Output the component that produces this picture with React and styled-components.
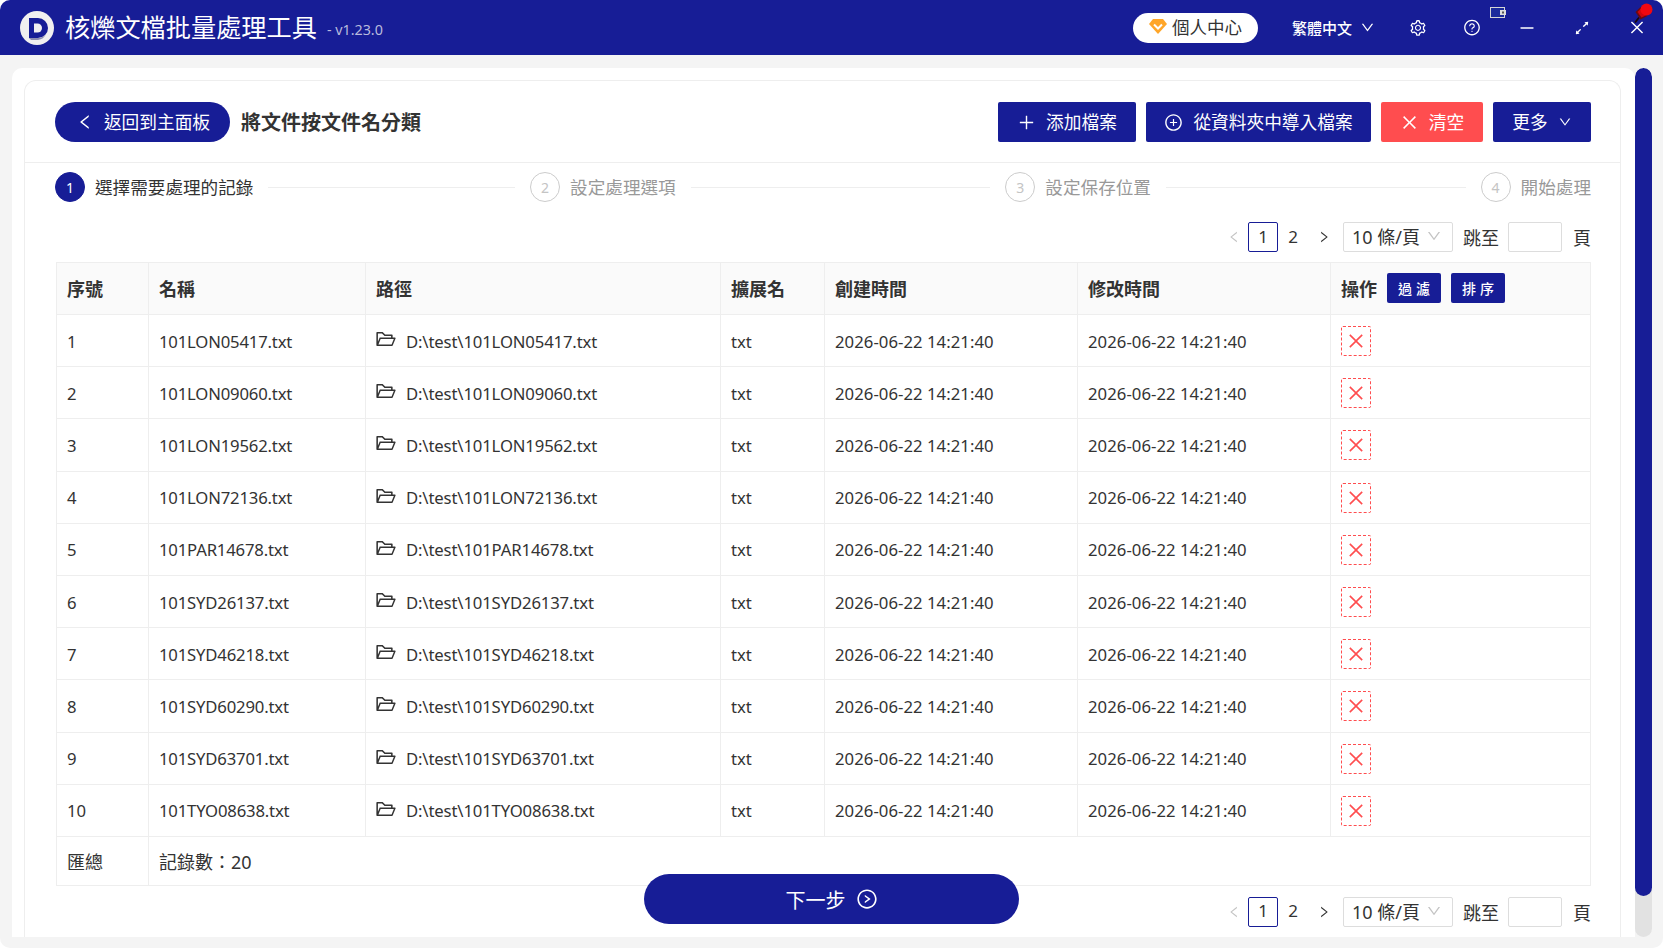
import React from 'react';
import styled, { createGlobalStyle } from 'styled-components';
import {
  AiOutlineLeft, AiOutlineRight, AiOutlineDown, AiOutlinePlus, AiOutlinePlusCircle, AiOutlineClose,
  AiOutlineSetting, AiOutlineQuestionCircle, AiOutlineMinus, AiOutlineArrowsAlt, AiOutlineFolderOpen,
  AiOutlineRightCircle,
} from 'react-icons/ai';

const BLUE = '#171d96';
const LINE = '#eeeeee';
const FONT = '"Noto Sans", "Noto Sans CJK TC", sans-serif';

const GlobalStyle = createGlobalStyle`
  html, body {
    margin: 0;
    padding: 0;
    background: #ffffff;
    font-family: ${FONT};
    color: #333333;
  }
  * { box-sizing: border-box; }
`;

const Window = styled.div`
  position: relative;
  width: 1663px;
  height: 948px;
  border-radius: 10px;
  overflow: hidden;
  background: #f4f4f4;
  display: flex;
  flex-direction: column;
`;

const TitleBar = styled.header`
  height: 55px;
  flex: none;
  background: ${BLUE};
  color: #fff;
  display: flex;
  align-items: center;
  padding-left: 20px;
`;

const AppName = styled.div`
  font-size: 25.2px;
  margin-left: 11px;
  line-height: 1;
`;

const Version = styled.div`
  font-size: 14.3px;
  color: #b9bbdd;
  margin-left: 10px;
  margin-top: 3px;
`;

const Spacer = styled.div`
  flex: 1;
`;

const UserPill = styled.div`
  width: 125px;
  height: 30px;
  border-radius: 15px;
  background: #fff;
  color: #333;
  font-size: 17.5px;
  padding-bottom: 2px;
  display: flex;
  align-items: center;
  justify-content: center;
  gap: 5px;
  margin-right: 34px;
`;

const Lang = styled.div`
  font-size: 15px;
  font-weight: 500;
  display: flex;
  align-items: center;
  gap: 8px;
  margin-right: 34px;
  svg { font-size: 15px; }
`;

const BarIcon = styled.div`
  width: ${p => p.$w}px;
  margin-right: ${p => p.$mr}px;
  display: flex;
  justify-content: center;
  font-size: ${p => p.$size || 18}px;
`;

const TrayBadge = styled.div`
  position: absolute;
  left: 1490px;
  top: 7px;
  line-height: 0;
`;

const PinBadge = styled.div`
  position: absolute;
  left: 1634px;
  top: 3px;
  line-height: 0;
`;

const Body = styled.div`
  flex: 1;
  min-height: 0;
  display: flex;
  padding: 13px 11px 11px 12px;
`;

const Panel = styled.main`
  flex: 1;
  background: #fff;
  border-radius: 10px 10px 0 0;
  padding: 12px 14px 0 12px;
  display: flex;
`;

const Card = styled.section`
  position: relative;
  flex: 1;
  border: 1px solid ${LINE};
  border-bottom: none;
  border-radius: 12px 12px 0 0;
  display: flex;
  flex-direction: column;
`;

const ScrollTrack = styled.div`
  width: 17px;
  flex: none;
  border-radius: 9px;
  background: #e2e2e2;
  overflow: hidden;
`;

const ScrollThumb = styled.div`
  height: 828px;
  background: ${BLUE};
  border-radius: 9px;
`;

const TopRow = styled.div`
  height: 82px;
  flex: none;
  border-bottom: 1px solid ${LINE};
  padding: 21px 29px 0 30px;
  display: flex;
  align-items: flex-start;
`;

const BackButton = styled.button`
  width: 175px;
  height: 40px;
  border: none;
  border-radius: 20px;
  background: ${BLUE};
  color: #fff;
  font: 17.7px ${FONT};
  display: flex;
  align-items: center;
  justify-content: center;
  gap: 10px;
  padding: 0 0 2px 1px;
  svg { font-size: 18px; margin-top: 2px; }
`;

const PageTitle = styled.h1`
  margin: 1px 0 0 11px;
  font-size: 20px;
  line-height: 40px;
  font-weight: 700;
  color: #333;
`;

const ActionButton = styled.button`
  width: ${p => p.$w}px;
  height: 40px;
  margin-left: 10px;
  border: none;
  border-radius: 2px;
  background: ${p => (p.$danger ? '#ff4d4f' : BLUE)};
  color: #fff;
  font: 17.7px ${FONT};
  display: flex;
  align-items: center;
  justify-content: center;
  gap: 10px;
  padding: 0 0 2px 0;
  svg { font-size: ${p => p.$icon || 19}px; margin-top: 2px; }
`;

const Steps = styled.div`
  margin-top: 9px;
  padding: 0 29px 0 30px;
  height: 30px;
  flex: none;
  display: flex;
  align-items: center;
`;

const StepDot = styled.div`
  width: 30px;
  height: 30px;
  border-radius: 50%;
  flex: none;
  font-size: 14px;
  display: flex;
  align-items: center;
  justify-content: center;
  background: ${p => (p.$active ? BLUE : '#fff')};
  color: ${p => (p.$active ? '#fff' : '#c4c4c4')};
  border: 1px solid ${p => (p.$active ? BLUE : '#cccccc')};
`;

const StepLabel = styled.div`
  margin-left: 10px;
  padding-bottom: 2px;
  font-size: 17.6px;
  color: ${p => (p.$active ? '#333' : '#999')};
  white-space: nowrap;
`;

const StepLine = styled.div`
  flex: ${p => p.$w} 1 0;
  height: 1px;
  background: ${LINE};
  margin: 0 15px;
`;

const Pager = styled.div`
  height: 30px;
  flex: none;
  margin: ${p => p.$top}px 29px 0 0;
  display: flex;
  align-items: center;
  justify-content: flex-end;
  font-size: 18px;
`;

const PagerArrow = styled.div`
  width: 14px;
  display: flex;
  justify-content: center;
  font-size: 16px;
  color: ${p => (p.$off ? '#c4c4c4' : '#333')};
  margin: ${p => p.$m};
`;

const PageNo = styled.div`
  width: 30px;
  height: 30px;
  border-radius: 2px;
  border: 1px solid ${p => (p.$on ? BLUE : 'transparent')};
  font-size: 17px;
  padding-bottom: 2px;
  display: flex;
  align-items: center;
  justify-content: center;
  margin: ${p => p.$m};
`;

const SizeSelect = styled.div`
  width: 110px;
  height: 30px;
  border: 1px solid #dddddd;
  border-radius: 2px;
  padding: 0 10px 2px 8px;
  display: flex;
  align-items: center;
  justify-content: space-between;
  font-size: 18px;
  svg { font-size: 16px; color: #c4c4c4; }
`;

const JumpLabel = styled.div`
  margin: 0 9px 0 10px;
`;

const JumpInput = styled.div`
  width: 54px;
  height: 30px;
  border: 1px solid #dddddd;
  border-radius: 2px;
`;

const PageWord = styled.div`
  margin-left: 11px;
`;

const Table = styled.div`
  margin: 10px 29px 0 31px;
  border-top: 1px solid ${LINE};
  border-left: 1px solid ${LINE};
  flex: none;
`;

const Row = styled.div`
  display: grid;
  grid-template-columns: 92px 217px 355px 104px 253px 253px 260px;
  height: ${p => p.$h}px;
  background: ${p => (p.$head ? '#fafafa' : '#fff')};
  font-weight: ${p => (p.$head ? 700 : 400)};
  font-size: ${p => (p.$head ? 18 : 16.7)}px;
  & > div { padding-bottom: ${p => (p.$head ? 2 : 0)}px; padding-top: ${p => (p.$head ? 0 : 1)}px; }
`;

const Cell = styled.div`
  border-right: 1px solid ${LINE};
  border-bottom: 1px solid ${LINE};
  padding-left: 10px;
  display: flex;
  align-items: center;
  min-width: 0;
  white-space: nowrap;
  letter-spacing: ${p => p.$ls || 0}px;
`;

const SummaryRow = styled.div`
  display: grid;
  grid-template-columns: 92px 1fr;
  height: 49px;
  font-size: 18px;
`;

const FolderIcon = styled.span`
  display: flex;
  font-size: 22px;
  margin: -4px 9px 0 -1px;
  color: #333;
`;

const DeleteBox = styled.button`
  width: 30px;
  height: 30px;
  padding: 0;
  border: 1px dashed #ff4d4f;
  border-radius: 2px;
  background: #fff;
  color: #ff4d4f;
  display: flex;
  align-items: center;
  justify-content: center;
  font-size: 20px;
`;

const HeadTag = styled.button`
  width: 54px;
  height: 30px;
  margin-left: 10px;
  border: none;
  border-radius: 2px;
  background: ${BLUE};
  color: #fff;
  font: 500 14px ${FONT};
  letter-spacing: 4px;
  padding: 0 0 0 4px;
`;

const NextButton = styled.button`
  position: absolute;
  left: 619px;
  bottom: 13px;
  width: 375px;
  height: 50px;
  border: none;
  border-radius: 25px;
  background: ${BLUE};
  color: #fff;
  font: 20px ${FONT};
  display: flex;
  align-items: center;
  justify-content: center;
  gap: 10px;
  padding: 0;
  svg { font-size: 22px; }
`;

const Logo = () => (
  <svg width="34" height="34" viewBox="0 0 34 34">
    <circle cx="17" cy="17" r="17" fill="#f1f0f0" />
    <path d="M9 7h9a10 10 0 0 1 0 20H9z" fill={BLUE} />
    <path d="M14 12.500h3.500a4.500 4.500 0 0 1 0 9H14z" fill="#f1f0f0" />
    <path d="M9 27h9a10 10 0 0 0 8-4a10 10 0 0 1-8 6H11z" fill="#8d8db0" />
  </svg>
);

const Gem = () => (
  <svg width="18" height="15" viewBox="0 0 18 15">
    <path d="M4 0h10l4 5-9 10L0 5z" fill="#ffa629" />
    <path d="M5 5.500l4 4 4-4" fill="none" stroke="#fff" strokeWidth="2" />
  </svg>
);

const Tray = () => (
  <svg width="16" height="11" viewBox="0 0 16 11">
    <rect x="0.500" y="0.500" width="14" height="10" fill="#1c2a9c" stroke="#d5d5d5" />
    <rect x="10" y="3" width="6" height="5" fill="#ddd" />
    <rect x="12" y="4.500" width="2" height="2" fill="#555" />
  </svg>
);

const Pin = () => (
  <svg width="19" height="20" viewBox="0 0 19 20">
    <path d="M1 19.500l4-5" stroke="#1c0808" strokeWidth="1.800" />
    <path d="M1.500 9l5-5 7 9-7 3.500z" fill="#6b0a10" />
    <path d="M3.500 9l5-5 5 7.500-6 3z" fill="#cf060e" />
    <circle cx="12.500" cy="6.500" r="6" fill="#f20810" />
  </svg>
);

const FILES = [
  '101LON05417', '101LON09060', '101LON19562', '101LON72136', '101PAR14678',
  '101SYD26137', '101SYD46218', '101SYD60290', '101SYD63701', '101TYO08638',
];

const STAMP = '2026-06-22 14:21:40';

const Pagination = ({ top }) => (
  <Pager $top={top}>
    <PagerArrow $off $m="0 7px 0 0"><AiOutlineLeft /></PagerArrow>
    <PageNo $on>1</PageNo>
    <PageNo $m="0 9px 0 0">2</PageNo>
    <PagerArrow $m="0 12px 0 0"><AiOutlineRight /></PagerArrow>
    <SizeSelect>10 條/頁<AiOutlineDown /></SizeSelect>
    <JumpLabel>跳至</JumpLabel>
    <JumpInput />
    <PageWord>頁</PageWord>
  </Pager>
);

const App = () => (
  <Window>
    <GlobalStyle />
    <TitleBar>
      <Logo />
      <AppName>核爍文檔批量處理工具</AppName>
      <Version>- v1.23.0</Version>
      <Spacer />
      <UserPill><Gem />個人中心</UserPill>
      <Lang>繁體中文<AiOutlineDown /></Lang>
      <BarIcon $w={18} $mr={36} $size={20}><AiOutlineSetting /></BarIcon>
      <BarIcon $w={18} $mr={37} $size={21}><AiOutlineQuestionCircle /></BarIcon>
      <BarIcon $w={18} $mr={37} $size={20}><AiOutlineMinus /></BarIcon>
      <BarIcon $w={18} $mr={37} $size={22}><AiOutlineArrowsAlt /></BarIcon>
      <BarIcon $w={18} $mr={17} $size={19}><AiOutlineClose /></BarIcon>
    </TitleBar>
    <TrayBadge><Tray /></TrayBadge>
    <PinBadge><Pin /></PinBadge>
    <Body>
      <Panel>
        <Card>
          <TopRow>
            <BackButton><AiOutlineLeft />返回到主面板</BackButton>
            <PageTitle>將文件按文件名分類</PageTitle>
            <Spacer />
            <ActionButton $w={138}><AiOutlinePlus />添加檔案</ActionButton>
            <ActionButton $w={225}><AiOutlinePlusCircle />從資料夾中導入檔案</ActionButton>
            <ActionButton $w={102} $danger><AiOutlineClose />清空</ActionButton>
            <ActionButton $w={98} $icon={14}>更多<AiOutlineDown /></ActionButton>
          </TopRow>
          <Steps>
            <StepDot $active>1</StepDot>
            <StepLabel $active>選擇需要處理的記錄</StepLabel>
            <StepLine $w={247} />
            <StepDot>2</StepDot>
            <StepLabel>設定處理選項</StepLabel>
            <StepLine $w={300} />
            <StepDot>3</StepDot>
            <StepLabel>設定保存位置</StepLabel>
            <StepLine $w={300} />
            <StepDot>4</StepDot>
            <StepLabel>開始處理</StepLabel>
          </Steps>
          <Pagination top={20} />
          <Table>
            <Row $head $h={52}>
              <Cell>序號</Cell>
              <Cell>名稱</Cell>
              <Cell>路徑</Cell>
              <Cell>擴展名</Cell>
              <Cell>創建時間</Cell>
              <Cell>修改時間</Cell>
              <Cell>操作<HeadTag>過濾</HeadTag><HeadTag>排序</HeadTag></Cell>
            </Row>
            {FILES.map((name, index) => (
              <Row key={name} $h={52.2}>
                <Cell>{index + 1}</Cell>
                <Cell $ls={-0.18}>{name}.txt</Cell>
                <Cell $ls={-0.14}>
                  <FolderIcon><AiOutlineFolderOpen /></FolderIcon>
                  D:\test\{name}.txt
                </Cell>
                <Cell>txt</Cell>
                <Cell $ls={0.05}>{STAMP}</Cell>
                <Cell $ls={0.05}>{STAMP}</Cell>
                <Cell><DeleteBox><AiOutlineClose /></DeleteBox></Cell>
              </Row>
            ))}
            <SummaryRow>
              <Cell>匯總</Cell>
              <Cell>記錄數：20</Cell>
            </SummaryRow>
          </Table>
          <Pagination top={11} />
          <NextButton>下一步<AiOutlineRightCircle /></NextButton>
        </Card>
      </Panel>
      <ScrollTrack><ScrollThumb /></ScrollTrack>
    </Body>
  </Window>
);

export default App;
